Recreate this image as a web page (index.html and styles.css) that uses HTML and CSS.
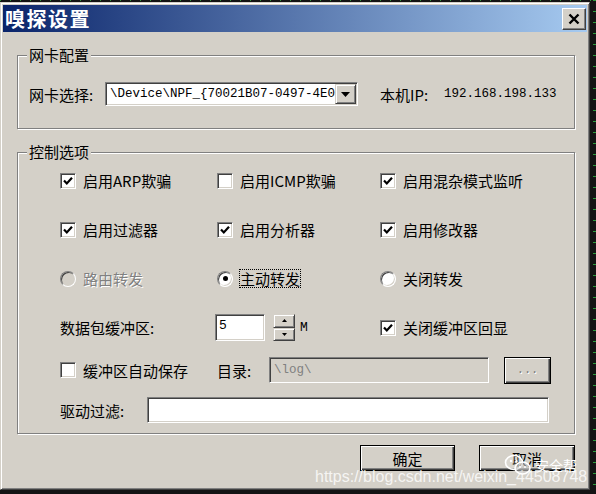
FILE: index.html
```html
<!DOCTYPE html>
<html lang="zh-CN">
<head>
    <meta charset="UTF-8">
    <meta name="viewport" content="width=device-width, initial-scale=1.0">
    <title>嗅探设置</title>
    <link rel="stylesheet" href="styles.css">
</head>
<body>
    <div class="window">
        <div class="titlebar">
            <span class="title">嗅探设置</span>
            <button class="close">
                <svg width="12" height="12" viewBox="0 0 12 12"><path d="M1.5 1.5 L10.5 10.5 M10.5 1.5 L1.5 10.5" stroke="#000" stroke-width="2.4"/></svg>
            </button>
        </div>

        <div class="content">
            <div class="group group-nic">
                <span class="group-title">网卡配置</span>
                <div class="nic-row">
                    <span class="nic-label">网卡选择:</span>
                    <div class="combo">
                        <span class="combo-text">\Device\NPF_{70021B07-0497-4E0B-8C1D}</span>
                        <span class="combo-btn">
                            <svg width="9" height="5" viewBox="0 0 9 5"><path d="M0 0 H9 L4.5 5 Z" fill="#000"/></svg>
                        </span>
                    </div>
                    <span class="ip-label">本机IP:</span>
                    <span class="mono">192.168.198.133</span>
                </div>
            </div>

            <div class="group group-opts">
                <span class="group-title">控制选项</span>

                <!-- fila 1 -->
                <label class="opt"><span class="box"><svg width="14" height="14" viewBox="0 0 14 14"><polyline points="3,6.5 5.8,9.5 11,3.8" fill="none" stroke="#000" stroke-width="2.2"/></svg></span>启用ARP欺骗</label>
                <label class="opt"><span class="box"></span>启用ICMP欺骗</label>
                <label class="opt"><span class="box"><svg width="14" height="14" viewBox="0 0 14 14"><polyline points="3,6.5 5.8,9.5 11,3.8" fill="none" stroke="#000" stroke-width="2.2"/></svg></span>启用混杂模式监听</label>

                <!-- fila 2 -->
                <label class="opt"><span class="box"><svg width="14" height="14" viewBox="0 0 14 14"><polyline points="3,6.5 5.8,9.5 11,3.8" fill="none" stroke="#000" stroke-width="2.2"/></svg></span>启用过滤器</label>
                <label class="opt"><span class="box"><svg width="14" height="14" viewBox="0 0 14 14"><polyline points="3,6.5 5.8,9.5 11,3.8" fill="none" stroke="#000" stroke-width="2.2"/></svg></span>启用分析器</label>
                <label class="opt"><span class="box"><svg width="14" height="14" viewBox="0 0 14 14"><polyline points="3,6.5 5.8,9.5 11,3.8" fill="none" stroke="#000" stroke-width="2.2"/></svg></span>启用修改器</label>

                <!-- fila 3 -->
                <label class="opt disabled"><span class="radio off"></span>路由转发</label>
                <label class="opt"><span class="radio on"></span><span class="focus">主动转发</span></label>
                <label class="opt"><span class="radio"></span>关闭转发</label>

                <!-- fila 4 -->
                <span class="opt">数据包缓冲区:</span>
                <div class="opt spin">
                    <span class="field spin-input">5</span>
                    <span class="spin-btns">
                        <span class="spin-btn"><svg width="5" height="3" viewBox="0 0 5 3"><path d="M0 3 H5 L2.5 0 Z" fill="#000"/></svg></span>
                        <span class="spin-btn"><svg width="5" height="3" viewBox="0 0 5 3"><path d="M0 0 H5 L2.5 3 Z" fill="#000"/></svg></span>
                    </span>
                    <span class="unit">M</span>
                </div>
                <label class="opt"><span class="box"><svg width="14" height="14" viewBox="0 0 14 14"><polyline points="3,6.5 5.8,9.5 11,3.8" fill="none" stroke="#000" stroke-width="2.2"/></svg></span>关闭缓冲区回显</label>

                <!-- fila 5 -->
                <label class="opt"><span class="box"></span>缓冲区自动保存</label>
                <div class="opt dir-row">
                    <span class="dir-label">目录:</span>
                    <span class="field dir-input">\log\</span>
                    <button class="btn small" disabled>...</button>
                </div>

                <!-- fila 6 -->
                <div class="opt filter-row">
                    <span class="filter-label">驱动过滤:</span>
                    <span class="field filter-input"></span>
                </div>
            </div>

            <div class="actions">
                <button class="btn ok">确定</button>
                <button class="btn cancel">取消</button>
            </div>
        </div>

        <span class="watermark">https://blog.csdn.net/weixin_44508748</span>
        <span class="brand">
            <svg width="28" height="22" viewBox="0 0 28 22">
                <ellipse cx="10" cy="8.5" rx="8.5" ry="7" fill="rgba(255,255,255,0.15)" stroke="#fff" stroke-width="1.6"/>
                <ellipse cx="18.5" cy="14" rx="7.5" ry="6" fill="rgba(200,200,200,0.6)" stroke="#fff" stroke-width="1.6"/>
                <circle cx="7" cy="7" r="1.2" fill="#fff"/>
                <circle cx="12.5" cy="7" r="1.2" fill="#fff"/>
                <circle cx="16" cy="13" r="1" fill="#fff"/>
                <circle cx="21" cy="13" r="1" fill="#fff"/>
            </svg>
            <span>安全帮</span>
        </span>
    </div>
</body>
</html>
```

FILE: styles.css
```css
body {
    margin: 0;
    background-color: #141414;
    background-image:
        repeating-linear-gradient(to bottom, #2c9a3c 0 1px, transparent 1px 11px),
        repeating-linear-gradient(to right, #2c9a3c 0 1px, transparent 1px 10px);
    background-size: 3px 100%, 100% 1px;
    background-position: right top, left top;
    background-repeat: no-repeat;
    font-family: "Noto Sans CJK SC", sans-serif;
    font-size: 15px;
    color: #000;
}
.window {
    position: relative;
    box-sizing: border-box;
    width: 590px;
    height: 488px;
    margin-top: 2px;
    padding: 2px;
    background-color: #d4d0c8;
    border: 1px solid;
    border-color: #d4d0c8 #404040 #404040 #d4d0c8;
    box-shadow: inset 1px 1px 0 #fff, inset -1px -1px 0 #808080;
}
.titlebar {
    display: flex;
    align-items: center;
    justify-content: space-between;
    height: 27px;
    padding: 0 1px 0 2px;
    background: linear-gradient(to right, #0a246a, #a6caf0);
}
.title {
    color: #fff;
    font-weight: bold;
    font-size: 20px;
    letter-spacing: 1.5px;
    line-height: 27px;
}
.close {
    display: flex;
    align-items: center;
    justify-content: center;
    box-sizing: border-box;
    width: 24px;
    height: 22px;
    padding: 0;
    background-color: #d4d0c8;
    border: 1px solid;
    border-color: #fff #404040 #404040 #fff;
    box-shadow: inset -1px -1px 0 #808080;
}
.content {
    padding: 0 12px 0 14px;
}
.group {
    position: relative;
    box-sizing: border-box;
    border: 1px solid #808080;
    box-shadow: 1px 1px 0 #fff, inset 1px 1px 0 #fff;
}
.group-title {
    position: absolute;
    top: -10px;
    left: 9px;
    padding: 0 2px;
    background-color: #d4d0c8;
    line-height: 18px;
}
.group-nic {
    margin-top: 23px;
    height: 74px;
    padding: 26px 0 0 11px;
}
.nic-row {
    display: flex;
    align-items: center;
    height: 24px;
}
.nic-label {
    width: 76px;
}
.combo {
    display: flex;
    box-sizing: border-box;
    width: 253px;
    height: 24px;
    background-color: #fff;
    border: 1px solid;
    border-color: #808080 #fff #fff #808080;
    box-shadow: inset 1px 1px 0 #404040, inset -1px -1px 0 #d4d0c8;
    padding: 1px;
}
.combo-text {
    flex: 1;
    overflow: hidden;
    white-space: nowrap;
    padding-left: 3px;
    font-family: "Liberation Mono", monospace;
    font-size: 12.5px;
    line-height: 20px;
}
.combo-btn {
    display: flex;
    align-items: center;
    justify-content: center;
    box-sizing: border-box;
    width: 21px;
    height: 20px;
    background-color: #d4d0c8;
    border: 1px solid;
    border-color: #d4d0c8 #404040 #404040 #d4d0c8;
    box-shadow: inset 1px 1px 0 #fff, inset -1px -1px 0 #808080;
}
.ip-label {
    width: 64px;
    margin-left: 22px;
}
.mono {
    font-family: "Liberation Mono", monospace;
    font-size: 12.5px;
}
.group-opts {
    display: grid;
    grid-template-columns: 157px 163px 1fr;
    grid-template-rows: 49px 49px 49px 49px 36px 44px;
    margin-top: 23px;
    height: 282px;
    padding: 3px 0 0 42px;
}
.opt {
    display: flex;
    align-items: center;
    gap: 7px;
    white-space: nowrap;
}
.box {
    display: flex;
    align-items: center;
    justify-content: center;
    box-sizing: border-box;
    width: 16px;
    height: 16px;
    background-color: #fff;
    border: 1px solid;
    border-color: #808080 #fff #fff #808080;
    box-shadow: inset 1px 1px 0 #404040, inset -1px -1px 0 #d4d0c8;
}
.radio {
    display: flex;
    align-items: center;
    justify-content: center;
    box-sizing: border-box;
    width: 16px;
    height: 16px;
    border-radius: 50%;
    background-color: #fff;
    border: 1px solid;
    border-color: #808080 #fff #fff #808080;
    box-shadow: inset 1px 1px 0 #404040, inset -1px -1px 0 #d4d0c8;
}
.radio.off {
    background-color: #d4d0c8;
}
.radio.on::after {
    content: "";
    width: 5px;
    height: 5px;
    border-radius: 50%;
    background-color: #000;
}
.disabled {
    color: #808080;
    text-shadow: 1px 1px 0 #fff;
}
.focus {
    outline: 1px dotted #000;
    line-height: 17px;
}
.field {
    box-sizing: border-box;
    background-color: #fff;
    border: 1px solid;
    border-color: #808080 #fff #fff #808080;
    box-shadow: inset 1px 1px 0 #404040, inset -1px -1px 0 #d4d0c8;
}
.spin {
    gap: 0;
}
.spin-input {
    width: 50px;
    height: 27px;
    margin-left: -2px;
    padding: 2px 0 0 3px;
    font-family: "Liberation Mono", monospace;
    font-size: 13px;
    line-height: 18px;
}
.spin-btns {
    display: flex;
    flex-direction: column;
    margin-left: 8px;
}
.spin-btn {
    display: flex;
    align-items: center;
    justify-content: center;
    box-sizing: border-box;
    width: 22px;
    height: 13.5px;
    background-color: #d4d0c8;
    border: 1px solid;
    border-color: #d4d0c8 #404040 #404040 #d4d0c8;
    box-shadow: inset 1px 1px 0 #fff, inset -1px -1px 0 #808080;
}
.unit {
    margin-left: 5px;
    font-family: "Liberation Mono", monospace;
    font-size: 13px;
}
.dir-row {
    grid-column: 2 / 4;
    gap: 0;
}
.dir-label {
    width: 52px;
}
.dir-input {
    width: 220px;
    height: 26px;
    padding-left: 4px;
    background-color: #d4d0c8;
    color: #808080;
    font-family: "Liberation Mono", monospace;
    font-size: 12.5px;
    line-height: 24px;
}
.filter-row {
    grid-column: 1 / 4;
    gap: 0;
}
.filter-label {
    width: 87px;
}
.filter-input {
    width: 402px;
    height: 26px;
}
.btn {
    box-sizing: border-box;
    height: 26px;
    padding: 0;
    background-color: #d4d0c8;
    border: 1px solid #000;
    box-shadow: inset 1px 1px 0 #fff, inset -1px -1px 0 #404040, inset -2px -2px 0 #808080;
    font-family: "Noto Sans CJK SC", sans-serif;
    font-size: 15px;
    color: #000;
}
.btn.small {
    width: 47px;
    height: 27px;
    margin-left: 15px;
    color: #808080;
    text-shadow: 1px 1px 0 #fff;
    font-family: "Liberation Mono", monospace;
    font-size: 12px;
}
.actions {
    display: flex;
    justify-content: flex-end;
    gap: 24px;
    margin-top: 11px;
}
.ok {
    width: 95px;
}
.cancel {
    width: 96px;
}
.watermark {
    position: absolute;
    left: 314px;
    top: 464px;
    font-family: "Liberation Sans", Arial, sans-serif;
    font-size: 16px;
    line-height: 20px;
    color: rgba(255, 255, 255, 0.8);
    white-space: nowrap;
}
.brand {
    position: absolute;
    left: 503px;
    top: 451px;
    display: flex;
    align-items: center;
    gap: 3px;
    color: #fff;
    font-size: 14px;
}
```
